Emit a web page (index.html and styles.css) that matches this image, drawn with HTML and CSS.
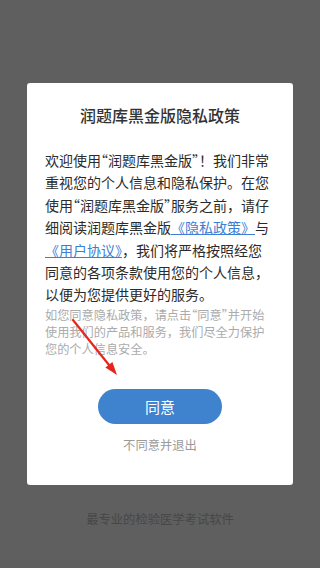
FILE: index.html
```html
<!DOCTYPE html>
<html lang="zh-CN">

<head>
  <meta charset="UTF-8">
  <meta name="viewport" content="width=device-width, initial-scale=1.0">
  <title>隐私政策</title>
  <link rel="stylesheet" href="styles.css">
</head>

<body>
  <div class="page">
    <div class="dialog">
      <h2 class="dialog-title">润题库黑金版隐私政策</h2>
      <p class="dialog-content">欢迎使用<span class="quoted">“润题库黑金版”</span>！我们非常<br>重视您的个人信息和隐私保护。在您<br>使用<span class="quoted">“润题库黑金版”</span>服务之前，请仔<br>细阅读润题库黑金版<a href="#">《隐私政策》</a>与<br><a href="#">《用户协议》</a>，我们将严格按照经您<br>同意的各项条款使用您的个人信息，<br>以便为您提供更好的服务。</p>
      <p class="dialog-tip">如您同意隐私政策，请点击<span class="quoted">“同意”</span>并开始<br>使用我们的产品和服务，我们尽全力保护<br>您的个人信息安全。</p>
      <div class="btn-agree">同意</div>
      <div class="btn-exit">不同意并退出</div>

      <!-- red annotation arrow -->
      <svg class="mark-arrow" width="60" height="70" viewBox="0 0 60 70">
        <line x1="6" y1="7" x2="42" y2="52" stroke="#e5261c" stroke-width="2.2" stroke-linecap="round" />
        <polygon points="50,62 45.4,49 38.4,54.6" fill="#e5261c" />
      </svg>
    </div>
    <div class="slogan">最专业的检验医学考试软件</div>
  </div>
</body>

</html>
```

FILE: styles.css
```css
* {
  box-sizing: border-box;
}

body {
  margin: 0;
  background-color: #5f5f5f;
  font-family: "Noto Sans CJK SC", "Noto Sans", sans-serif;
}

.page {
  display: flex;
  flex-direction: column;
  align-items: center;
  padding-top: 83px;
  height: 568px;
}

.dialog {
  position: relative;
  width: 266px;
  height: 402px;
  padding: 21px 18px 0;
  background-color: #fff;
  border-radius: 3px;
}

.dialog-title {
  margin: 0;
  font-size: 16px;
  line-height: 22px;
  font-weight: 500;
  color: #333;
  text-align: center;
}

.dialog-content {
  margin: 23px 0 0;
  font-size: 14px;
  line-height: 22.4px;
  color: #2b2b2b;
  white-space: nowrap;
}

.dialog-content a {
  color: #3c7fd4;
  text-decoration: underline;
}

/* half-width quote marks, like on the phone */
.quoted {
  font-feature-settings: "halt";
}

.dialog-tip {
  margin: 1px 0 0;
  font-size: 12.2px;
  line-height: 17px;
  color: #ababab;
  white-space: nowrap;
}

.btn-agree {
  margin: 31px auto 0;
  width: 124px;
  height: 35px;
  line-height: 35px;
  border-radius: 18px;
  background-color: #3f82cd;
  color: #fff;
  font-size: 15px;
  text-align: center;
}

.btn-exit {
  margin-top: 13px;
  font-size: 12.3px;
  line-height: 17px;
  color: #9a9a9a;
  text-align: center;
}

.mark-arrow {
  position: absolute;
  left: 40px;
  top: 230px;
}

.slogan {
  margin-top: 26px;
  font-size: 12.3px;
  line-height: 17px;
  color: #474747;
}
```
